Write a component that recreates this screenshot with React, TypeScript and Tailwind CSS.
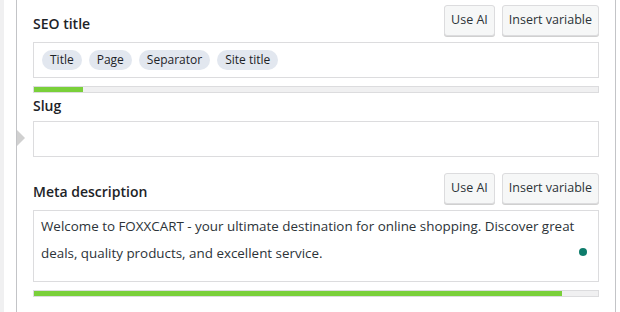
export default function App() {
  const chips = ["Title", "Page", "Separator", "Site title"];

  const Buttons = () => (
    <div className="flex gap-[7px]">
      <button className="h-[31px] rounded-[3px] border border-[#dcdcde] bg-[#f6f7f7] px-[6px] text-[12.5px] text-[#2c3338] shadow-[0_1px_0_#d0d0d0]">
        Use AI
      </button>
      <button className="h-[31px] rounded-[3px] border border-[#dcdcde] bg-[#f6f7f7] px-[6px] text-[12.5px] text-[#2c3338] shadow-[0_1px_0_#d0d0d0]">
        Insert variable
      </button>
    </div>
  );

  return (
    <div className="flex h-[312px] w-[620px] overflow-hidden bg-white font-['Open_Sans',sans-serif] text-[#1d2327]">
      <div className="w-[4px] bg-[#f0f0f1]" />
      <div className="w-[12px]" />
      <div className="relative mr-[4px] flex-1 border-x border-[#c3c4c7] px-4 pt-[5px]">
        {/* pointer arrow */}
        <div className="absolute left-0 top-[130px] h-0 w-0 border-y-[8px] border-l-[8px] border-y-transparent border-l-[#d0d0d0]" />

        {/* SEO title */}
        <div className="flex items-center justify-between">
          <span className="pt-[6px] text-[14px] font-semibold">SEO title</span>
          <Buttons />
        </div>
        <div className="mt-[6px] flex h-[36px] items-center gap-[7px] border border-[#dcdcde] px-[8px]">
          {chips.map((c) => (
            <span
              key={c}
              className="rounded-full bg-[#e2e7ef] px-[8px] py-[1px] text-[12px] leading-[18px] text-[#1d2327]"
            >
              {c}
            </span>
          ))}
        </div>
        <div className="mt-[8px] h-[7px] border border-[#dcdcde] bg-[#f0f0f1]">
          <div className="h-full w-[49px] bg-[#7ad03a]" />
        </div>

        {/* Slug */}
        <div className="mt-[2px] text-[14px] font-semibold leading-[22px]">Slug</div>
        <div className="mt-[4px] h-[36px] border border-[#dcdcde]" />

        {/* Meta description */}
        <div className="mt-[16px] flex items-center justify-between">
          <span className="pt-[6px] text-[14px] font-semibold">Meta description</span>
          <Buttons />
        </div>
        <div className="relative mt-[6px] h-[72px] border border-[#dcdcde] px-[7px] pt-[2px] text-[13.4px] leading-[27px] text-[#2c3338]">
          Welcome to FOXXCART - your ultimate destination for online shopping. Discover great deals, quality products, and excellent service.
          <span className="absolute bottom-[25px] right-[11px] h-[8px] w-[8px] rounded-full bg-[#0e7c6b]" />
        </div>
        <div className="mt-[8px] h-[7px] border border-[#dcdcde] bg-[#f0f0f1]">
          <div className="h-full w-[528px] bg-[#7ad03a]" />
        </div>
      </div>
    </div>
  );
}
